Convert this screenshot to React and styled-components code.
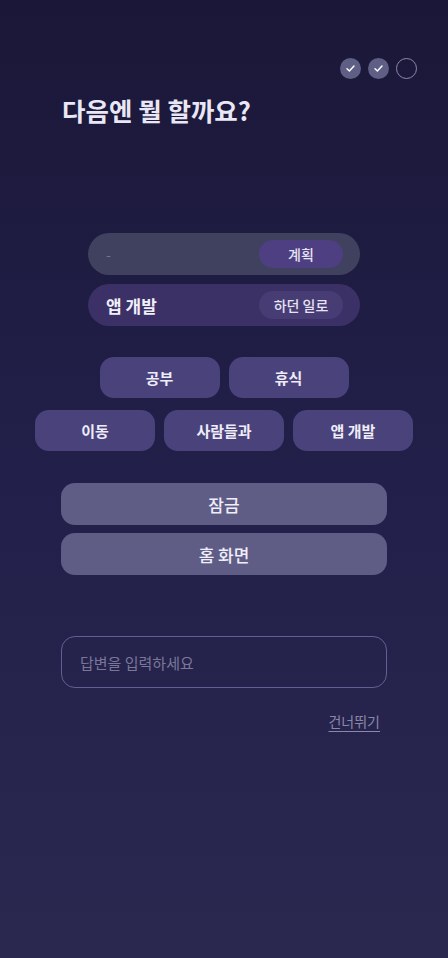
import React from 'react'
import styled, { createGlobalStyle } from 'styled-components'

const GlobalStyle = createGlobalStyle`
  html, body { margin: 0; padding: 0; }
  body {
    font-family: "Noto Sans CJK KR", "Noto Sans", sans-serif;
    background: #1b1738;
  }
`

const Screen = styled.div`
  width: 448px;
  height: 958px;
  box-sizing: border-box;
  background: linear-gradient(180deg, #1b1738 0%, #22204a 50%, #2a284f 100%);
  display: flex;
  flex-direction: column;
  padding-top: 58px;
`

const Progress = styled.div`
  display: flex;
  justify-content: flex-end;
  gap: 7px;
  padding-right: 31px;
`

const Dot = styled.div`
  width: 21px;
  height: 21px;
  border-radius: 50%;
  box-sizing: border-box;
  display: flex;
  align-items: center;
  justify-content: center;
  background: ${(p) => (p.$done ? '#5f5f86' : 'transparent')};
  border: ${(p) => (p.$done ? 'none' : '1.5px solid #8c8aad')};
`

const Title = styled.h1`
  margin: 14px 0 0 62px;
  font-size: 25.5px;
  font-weight: 700;
  color: #e9e7f6;
  line-height: 1.3;
`

const Rows = styled.div`
  margin-top: 107px;
  display: flex;
  flex-direction: column;
  align-items: center;
  gap: 9px;
`

const Row = styled.div`
  width: 272px;
  height: 42px;
  border-radius: 21px;
  box-sizing: border-box;
  display: flex;
  align-items: center;
  justify-content: space-between;
  padding: 0 17px 0 18px;
  background: ${(p) => (p.$active ? '#3b3167' : '#40415e')};
`

const RowLabel = styled.span`
  font-size: ${(p) => (p.$muted ? '14px' : '17px')};
  font-weight: ${(p) => (p.$muted ? 400 : 700)};
  color: ${(p) => (p.$muted ? '#75758f' : '#f1effa')};
`

const RowChip = styled.span`
  width: 84px;
  height: 28px;
  border-radius: 14px;
  display: flex;
  align-items: center;
  justify-content: center;
  font-size: 14px;
  font-weight: 500;
  color: #e6e3f4;
  background: ${(p) => (p.$active ? '#4d3f81' : '#473d74')};
`

const Chips = styled.div`
  margin-top: 31px;
  display: flex;
  flex-direction: column;
  align-items: center;
  gap: 12px;
`

const ChipRow = styled.div`
  display: flex;
  gap: 9px;
`

const Chip = styled.button`
  width: 120px;
  height: 41px;
  border: none;
  border-radius: 14px;
  background: #4a437b;
  color: #eeecf8;
  font-family: inherit;
  font-size: 15px;
  font-weight: 700;
`

const Actions = styled.div`
  margin-top: 32px;
  display: flex;
  flex-direction: column;
  align-items: center;
  gap: 8px;
`

const Action = styled.button`
  width: 326px;
  height: 42px;
  border: none;
  border-radius: 14px;
  background: #5f5d86;
  color: #f0eef8;
  font-family: inherit;
  font-size: 17px;
  font-weight: 500;
`

const Answer = styled.div`
  margin: 61px 0 0 61px;
  width: 326px;
  height: 52px;
  box-sizing: border-box;
  border: 1px solid #645f93;
  border-radius: 14px;
  display: flex;
  align-items: center;
  padding-left: 18px;
  font-size: 15px;
  color: #7b7799;
`

const Skip = styled.div`
  margin: 23px 68px 0 0;
  align-self: flex-end;
  font-size: 14px;
  color: #8a87a9;
  text-decoration: underline;
  text-underline-offset: 4px;
`

const Check = () => (
  <svg width="11" height="11" viewBox="0 0 12 12" fill="none">
    <path d="M2.2 6.3 4.8 8.8 9.8 3.4" stroke="#ffffff" strokeWidth="1.6" strokeLinecap="round" strokeLinejoin="round" />
  </svg>
)

export default function App() {
  return (
    <>
      <GlobalStyle />
      <Screen>
        <Progress>
          <Dot $done><Check /></Dot>
          <Dot $done><Check /></Dot>
          <Dot />
        </Progress>
        <Title>다음엔 뭘 할까요?</Title>
        <Rows>
          <Row>
            <RowLabel $muted>-</RowLabel>
            <RowChip $active>계획</RowChip>
          </Row>
          <Row $active>
            <RowLabel>앱 개발</RowLabel>
            <RowChip>하던 일로</RowChip>
          </Row>
        </Rows>
        <Chips>
          <ChipRow>
            <Chip>공부</Chip>
            <Chip>휴식</Chip>
          </ChipRow>
          <ChipRow>
            <Chip>이동</Chip>
            <Chip>사람들과</Chip>
            <Chip>앱 개발</Chip>
          </ChipRow>
        </Chips>
        <Actions>
          <Action>잠금</Action>
          <Action>홈 화면</Action>
        </Actions>
        <Answer>답변을 입력하세요</Answer>
        <Skip>건너뛰기</Skip>
      </Screen>
    </>
  )
}
